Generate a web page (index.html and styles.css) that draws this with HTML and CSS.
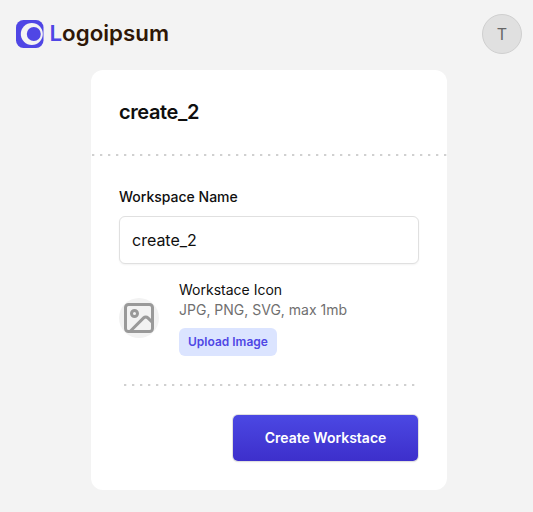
FILE: index.html
```html
<!DOCTYPE html>
<html lang="en">
  <head>
    <meta charset="UTF-8" />
    <meta name="viewport" content="width=device-width, initial-scale=1.0" />
    <title>Create Workspace</title>
    <link rel="stylesheet" href="styles.css">
  </head>
  <body>
    <header class="header">
      <a class="logo">
        <svg width="156" height="36" viewBox="0 0 156 36">
          <rect x="0" y="6" width="27.5" height="28" rx="7.5" fill="#4f46e5" />
          <circle cx="15.8" cy="20" r="11" fill="#f3f3f3" />
          <circle cx="17.8" cy="20" r="7" fill="#4f46e5" />
          <text class="logo-text" x="33.5" y="27" textLength="119.5" lengthAdjust="spacingAndGlyphs"><tspan class="logo-first">L</tspan>ogoipsum</text>
        </svg>
      </a>
      <div class="avatar">T</div>
    </header>

    <main class="card">
      <h2 class="card-title">create_2</h2>
      <svg class="divider" width="356" height="2">
        <line x1="1" y1="1" x2="356" y2="1" />
      </svg>

      <form class="card-body" onsubmit="return false">
        <label class="label" for="name">Workspace Name</label>
        <input class="input" type="text" id="name" value="create_2" />

        <!-- Icon upload -->
        <div class="upload">
          <div class="upload-icon">
            <svg width="36" height="36" viewBox="0 0 24 24" fill="none" stroke="#999" stroke-width="2" stroke-linecap="round" stroke-linejoin="round">
              <rect x="3" y="3" width="18" height="18" rx="2" />
              <circle cx="9" cy="9" r="2" />
              <path d="m21 15-3.086-3.086a2 2 0 0 0-2.828 0L6 21" />
            </svg>
          </div>
          <div class="upload-info">
            <p>Workstace Icon</p>
            <p class="hint">JPG, PNG, SVG, max 1mb</p>
            <button class="upload-btn" type="button">Upload Image</button>
          </div>
        </div>

        <svg class="divider" width="300" height="2">
          <line x1="5" y1="1" x2="296" y2="1" />
        </svg>

        <button class="submit-btn" type="submit">Create Workstace</button>
      </form>
    </main>
  </body>
</html>
```

FILE: styles.css
```css
* {
  box-sizing: border-box;
}
body {
  margin: 0;
  height: 512px;
  overflow: hidden;
  background-color: #f3f3f3;
  color: #0f0f0f;
  font-family: Inter, sans-serif;
  font-size: 14px;
  line-height: 20px;
}
p {
  margin: 0;
}
svg {
  display: block;
}
.header {
  display: flex;
  justify-content: space-between;
  padding: 14px 11px 0 16px;
}
.logo-text {
  font-size: 22px;
  font-weight: 600;
  fill: #2f1707;
}
.logo-first {
  fill: #4f46e5;
}
.avatar {
  display: flex;
  align-items: center;
  justify-content: center;
  width: 40px;
  height: 40px;
  border: 1px solid #cfcfcf;
  border-radius: 50%;
  background-color: #e0e0e0;
  color: #666;
  font-size: 16px;
}
.card {
  width: 356px;
  height: 420px;
  margin: 16px 0 0 91px;
  background-color: white;
  border-radius: 12px;
}
.card-title {
  margin: 0;
  padding: 28px 28px;
  font-size: 20px;
  font-weight: 600;
  line-height: 28px;
  letter-spacing: -0.4px;
}
.divider line {
  stroke: #d0d0d0;
  stroke-width: 2;
  stroke-dasharray: 2.3 5.7;
}
.card-body {
  display: flex;
  flex-direction: column;
  padding: 31px 28px 28px;
}
.label {
  margin-bottom: 9px;
  font-weight: 500;
}
.input {
  width: 100%;
  height: 48px;
  padding: 0 12px;
  border: 1px solid #e0e0e0;
  border-radius: 6px;
  box-shadow: 0 1px 2px rgba(0, 0, 0, 0.05);
  color: #0f0f0f;
  font-family: inherit;
  font-size: 16px;
}
.upload {
  display: flex;
  align-items: center;
  gap: 20px;
  margin: 16px 0 28px;
}
.upload-icon {
  display: flex;
  align-items: center;
  justify-content: center;
  width: 40px;
  height: 40px;
  border-radius: 50%;
  background-color: #f2f2f2;
}
.hint {
  color: #707070;
}
.upload-btn {
  display: block;
  height: 28px;
  margin-top: 8px;
  padding: 0 9px 2px;
  border: none;
  border-radius: 6px;
  background-color: #dbe4ff;
  color: #4f46e5;
  font-family: inherit;
  font-size: 12px;
  font-weight: 600;
}
.submit-btn {
  align-self: flex-end;
  width: 185px;
  height: 46px;
  margin: 29px 1px 0 0;
  padding-bottom: 3px;
  border: none;
  border-radius: 5px;
  background: linear-gradient(#4b48e3, #3d2fcb);
  box-shadow: 0 0 0 1px #e0e0e0, 0 1px 2px rgba(0, 0, 0, 0.1);
  color: white;
  font-family: inherit;
  font-size: 14px;
  font-weight: 600;
}
```
